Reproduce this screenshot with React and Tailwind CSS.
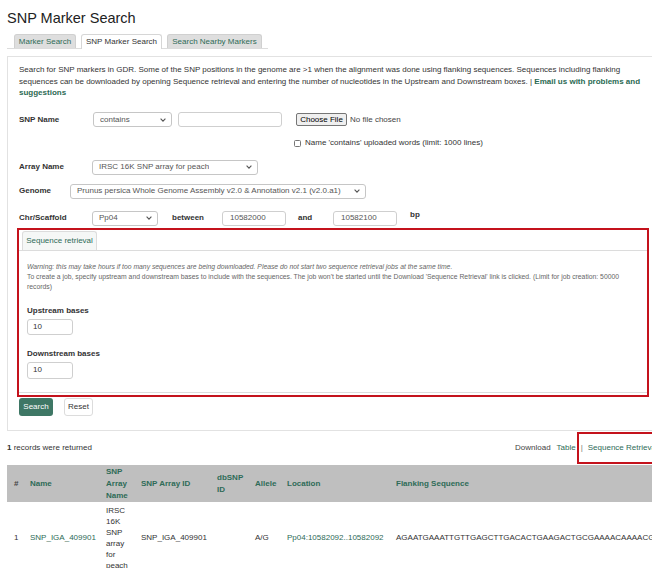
import React from "react";

function Chevron() {
  return (
    <svg width="6" height="4" viewBox="0 0 6 4" className="shrink-0">
      <path d="M0.6 0.6 L3 3.1 L5.4 0.6" fill="none" stroke="#555" strokeWidth="1.1" />
    </svg>
  );
}

function Select({ className, children }) {
  return (
    <div
      className={`flex shrink-0 items-center justify-between rounded-[3px] border border-[#c6c6c6] bg-white pl-[6px] pr-[5px] text-[#555] ${className}`}
    >
      <span className="truncate whitespace-nowrap">{children}</span>
      <Chevron />
    </div>
  );
}

function TextBox({ className, children }) {
  return (
    <div
      className={`flex shrink-0 items-center rounded-[3px] border border-[#cfcfcf] bg-white ${className}`}
    >
      {children}
    </div>
  );
}

function Lines({ words }) {
  return (
    <div>
      {words.map((w) => (
        <div key={w}>{w}</div>
      ))}
    </div>
  );
}

export default function App() {
  return (
    <div className="h-[568px] w-[652px] overflow-hidden bg-white font-['Liberation_Sans',Arial,sans-serif] text-[8px] text-[#333]">
      <h1 className="ml-[7px] mt-[10px] h-[17px] whitespace-nowrap text-[14.5px] font-normal leading-[17px] text-[#222]">
        SNP Marker Search
      </h1>

      {/* page tabs */}
      <div className="ml-[7px] mt-[7px] flex w-[261px] gap-[5px] border-b border-[#dcdcdc] pl-[7px]">
        <div className="flex h-[14px] w-[62px] items-center justify-center rounded-t-[3px] border border-b-0 border-[#d0d0d0] bg-[#dedede] text-[#2e6b57]">
          Marker Search
        </div>
        <div className="-mb-px flex h-[15px] w-[81px] items-center justify-center rounded-t-[3px] border border-b-0 border-[#d6d6d6] bg-white text-[#333]">
          SNP Marker Search
        </div>
        <div className="flex h-[14px] w-[95px] items-center justify-center rounded-t-[3px] border border-b-0 border-[#d0d0d0] bg-[#dedede] text-[#2e6b57]">
          Search Nearby Markers
        </div>
      </div>

      {/* search form panel */}
      <div className="ml-[7px] mt-[7px] h-[375px] w-[670px] border border-[#e2e2e2] pl-[11px] pt-[7px]">
        <div className="whitespace-nowrap leading-[11.5px]">
          <div>
            Search for SNP markers in GDR. Some of the SNP positions in the genome are &gt;1 when the alignment was done using
            flanking sequences. Sequences including flanking
          </div>
          <div>
            sequences can be downloaded by opening Sequence retrieval and entering the number of nucleotides in the Upstream and
            Downstream boxes. | <span className="font-bold text-[#2a6a53]">Email us with problems and</span>
          </div>
          <div className="font-bold text-[#2a6a53]">suggestions</div>
        </div>

        {/* SNP Name */}
        <div className="mt-[12.5px] flex h-[17px] items-center whitespace-nowrap">
          <span className="w-[74px] shrink-0 font-bold">SNP Name</span>
          <Select className="h-[15px] w-[79px]">contains</Select>
          <TextBox className="ml-[6px] h-[15px] w-[104px]" />
          <div className="ml-[14px] flex h-[13px] w-[51px] shrink-0 items-center justify-center rounded-[2px] border border-[#767676] bg-[#efefef] text-black">
            Choose File
          </div>
          <span className="ml-[3px] text-[#444]">No file chosen</span>
        </div>

        <div className="mt-[9px] flex h-[12px] items-center whitespace-nowrap pl-[275px]">
          <span className="h-[7px] w-[7px] shrink-0 rounded-[1.5px] border border-[#767676] bg-white" />
          <span className="ml-[4px]">Name 'contains' uploaded words (limit: 1000 lines)</span>
        </div>

        {/* Array Name */}
        <div className="mt-[10px] flex h-[16px] items-center whitespace-nowrap">
          <span className="w-[73px] shrink-0 font-bold">Array Name</span>
          <Select className="h-[15px] w-[166px]">IRSC 16K SNP array for peach</Select>
        </div>

        {/* Genome */}
        <div className="mt-[8px] flex h-[16px] items-center whitespace-nowrap">
          <span className="w-[51px] shrink-0 font-bold">Genome</span>
          <Select className="h-[15px] w-[296px]">Prunus persica Whole Genome Assembly v2.0 &amp; Annotation v2.1 (v2.0.a1)</Select>
        </div>

        {/* Chr/Scaffold range */}
        <div className="mt-[11px] flex h-[16px] items-center whitespace-nowrap">
          <span className="w-[73px] shrink-0 font-bold">Chr/Scaffold</span>
          <Select className="h-[15px] w-[66px]">Pp04</Select>
          <span className="ml-[14px] w-[50px] shrink-0 font-bold">between</span>
          <TextBox className="h-[15px] w-[64px] pl-[7px] text-[#555]">10582000</TextBox>
          <span className="ml-[12px] w-[35px] shrink-0 font-bold">and</span>
          <TextBox className="h-[15px] w-[64px] pl-[7px] text-[#555]">10582100</TextBox>
          <span className="mb-[6px] ml-[13px] font-bold">bp</span>
        </div>

        {/* sequence retrieval panel */}
        <div className="ml-[-2px] mt-[2px] h-[169px] w-[632px] border-2 border-[#c4121c]">
          <div className="h-[163px] border-b border-[#dcdcdc]">
            <div className="flex border-b border-[#dcdcdc] pl-[3px] pt-[1px]">
              <div className="flex h-[19px] w-[75px] items-center justify-center rounded-t-[3px] border border-b-0 border-[#dcdcdc] bg-[#f5f7f6] text-[#2e6b57]">
                Sequence retrieval
              </div>
            </div>
            <div className="pl-[8px]">
              <div className="mt-[11px] whitespace-nowrap text-[6.8px] leading-[10px] text-[#666]">
                <div className="italic">
                  Warning: this may take hours if too many sequences are being downloaded. Please do not start two sequence
                  retrieval jobs at the same time.
                </div>
                <div>
                  To create a job, specify upstream and downstream bases to include with the sequences. The job won't be started
                  until the Download 'Sequence Retrieval' link is clicked. (Limit for job creation: 50000
                </div>
                <div>records)</div>
              </div>
              <div className="mt-[12.5px] font-bold leading-[11px]">Upstream bases</div>
              <TextBox className="mt-[3px] h-[16px] w-[46px] pl-[5px] text-[#333]">10</TextBox>
              <div className="mt-[13.5px] font-bold leading-[11px]">Downstream bases</div>
              <TextBox className="mt-[2.5px] h-[17px] w-[46px] pl-[5px] text-[#333]">10</TextBox>
            </div>
          </div>
        </div>

        <div className="mt-[1px] flex items-center">
          <div className="flex h-[18px] w-[34px] items-center justify-center rounded-[3px] bg-[#3e7765] text-white">Search</div>
          <div className="ml-[11px] flex h-[18px] w-[29px] items-center justify-center rounded-[3px] border border-[#dcdcdc] bg-white">
            Reset
          </div>
        </div>
      </div>

      {/* results summary */}
      <div className="ml-[7px] flex h-[34px] w-[700px] items-center whitespace-nowrap">
        <span className="w-[508px] shrink-0">
          <span className="font-bold">1</span> records were returned
        </span>
        <span className="shrink-0 text-[#444]">Download</span>
        <span className="ml-[6px] shrink-0 text-[#2e6b57]">Table</span>
        <span className="ml-[1px] flex h-[32px] shrink-0 items-center border-2 border-[#c4121c] pl-[2px] pr-[20px]">
          <span className="text-[#777]">|</span>
          <span className="ml-[5px] text-[#2e6b57]">Sequence Retrieval</span>
        </span>
      </div>

      {/* results table */}
      <div className="ml-[7px] w-[802px]">
        <div className="grid h-[37px] grid-cols-[16px_76px_35px_76px_38px_32px_109px_420px] items-center bg-[#bfbfbf] font-bold leading-[12px] text-[#2e6b57]">
          <div className="pl-[7px] text-[#444]">#</div>
          <div className="pl-[7px]">Name</div>
          <div className="pl-[7px]">
            <Lines words={["SNP", "Array", "Name"]} />
          </div>
          <div className="whitespace-nowrap pl-[7px]">SNP Array ID</div>
          <div className="pl-[7px]">
            <Lines words={["dbSNP", "ID"]} />
          </div>
          <div className="pl-[7px]">Allele</div>
          <div className="pl-[7px]">Location</div>
          <div className="whitespace-nowrap pl-[7px]">Flanking Sequence</div>
        </div>
        <div className="grid grid-cols-[16px_76px_35px_76px_38px_32px_109px_420px] items-center pt-[2.5px] leading-[11px]">
          <div className="pl-[7px]">1</div>
          <div className="whitespace-nowrap pl-[7px] text-[#2e6b57]">SNP_IGA_409901</div>
          <div className="pl-[7px]">
            <Lines words={["IRSC", "16K", "SNP", "array", "for", "peach"]} />
          </div>
          <div className="whitespace-nowrap pl-[7px]">SNP_IGA_409901</div>
          <div className="pl-[7px]"></div>
          <div className="pl-[7px]">A/G</div>
          <div className="whitespace-nowrap pl-[7px] text-[#2e6b57]">Pp04:10582092..10582092</div>
          <div className="whitespace-nowrap pl-[7px]">AGAATGAAATTGTTGAGCTTGACACTGAAGACTGCGAAAACAAAACGATTCAAAGG</div>
        </div>
      </div>
    </div>
  );
}
